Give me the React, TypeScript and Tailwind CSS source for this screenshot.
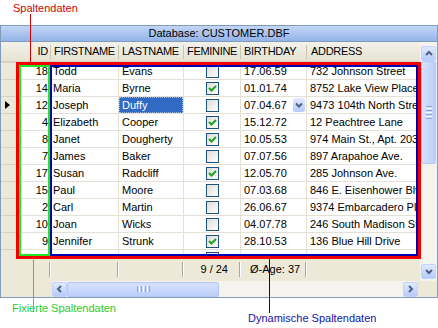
import React from "react";

type Row = { id: number; first: string; last: string; fem: boolean; birth: string; addr: string };

const rows: Row[] = [
  { id: 18, first: "Todd", last: "Evans", fem: false, birth: "17.06.59", addr: "732 Johnson Street" },
  { id: 14, first: "Maria", last: "Byrne", fem: true, birth: "01.01.74", addr: "8752 Lake View Place" },
  { id: 12, first: "Joseph", last: "Duffy", fem: false, birth: "07.04.67", addr: "9473 104th North Street" },
  { id: 4, first: "Elizabeth", last: "Cooper", fem: true, birth: "15.12.72", addr: "12 Peachtree Lane" },
  { id: 8, first: "Janet", last: "Dougherty", fem: true, birth: "10.05.53", addr: "974 Main St., Apt. 203" },
  { id: 7, first: "James", last: "Baker", fem: false, birth: "07.07.56", addr: "897 Arapahoe Ave." },
  { id: 17, first: "Susan", last: "Radcliff", fem: true, birth: "12.05.70", addr: "285 Johnson Ave." },
  { id: 15, first: "Paul", last: "Moore", fem: false, birth: "07.03.68", addr: "846 E. Eisenhower Blvd" },
  { id: 2, first: "Carl", last: "Martin", fem: false, birth: "26.06.67", addr: "9374 Embarcadero Plaza" },
  { id: 10, first: "Joan", last: "Wicks", fem: false, birth: "04.07.78", addr: "246 South Madison Street" },
  { id: 9, first: "Jennifer", last: "Strunk", fem: true, birth: "28.10.53", addr: "136 Blue Hill Drive" },
  { id: 16, first: "Kathy", last: "Green", fem: true, birth: "31.01.75", addr: "1643 Lawrence Ave." },
];

function Check({ on }: { on: boolean }) {
  return (
    <div className="w-[13px] h-[13px] border border-[#1c5180] bg-gradient-to-br from-[#dcdcd7] to-white flex items-center justify-center">
      {on && (
        <svg width="9" height="9" viewBox="0 0 9 9">
          <polyline points="1,4 3.5,6.5 8,2" fill="none" stroke="#21a121" strokeWidth="2" />
        </svg>
      )}
    </div>
  );
}

function Arrow({ dir }: { dir: "up" | "down" | "left" | "right" }) {
  const pts = {
    up: "2,6 5,3 8,6",
    down: "2,3 5,6 8,3",
    left: "6,2 3,5 6,8",
    right: "3,2 6,5 3,8",
  }[dir];
  return (
    <div className="w-[15px] h-[15px] rounded-[2px] border border-[#c3d3fd] bg-gradient-to-b from-[#e1eafe] to-[#b6cbf9] flex items-center justify-center shrink-0">
      <svg width="10" height="10" viewBox="0 0 10 10">
        <polyline points={pts} fill="none" stroke="#4d6185" strokeWidth="2" />
      </svg>
    </div>
  );
}

function Sep() {
  return <div className="w-[2px] h-[15px] shrink-0 border-l border-[#aca899] border-r border-r-white" />;
}

function HeadSep() {
  return <div className="w-[1px] h-[14px] shrink-0 bg-[#c7c5b2]" />;
}

export default function App() {
  return (
    <div className="relative w-[438px] h-[328px] bg-white overflow-hidden font-['Liberation_Sans',Arial,sans-serif] text-[11px] text-black leading-none">
      {/* top label */}
      <div className="h-[25px] pl-[13px] pt-[3px] text-[#d40000]">Spaltendaten</div>

      {/* grid */}
      <div className="w-[438px] h-[273px] border border-[#7f9db9] bg-[#ece9d8] flex flex-col">
        <div className="h-[16px] shrink-0 bg-gradient-to-b from-[#c3d5f4] to-[#94b3e8] border-b border-[#7f9db9] flex items-center justify-center">
          Database: CUSTOMER.DBF
        </div>
        <div className="flex flex-1">
          <div className="w-[419px] flex flex-col">
            {/* header */}
            <div className="h-[21px] flex items-center bg-gradient-to-b from-[#f3f2ea] to-[#e6e3d3] border-b-[2px] border-[#d6d2c2] tracking-[-0.3px]">
              <div className="w-[16px]" />
              <div className="w-[34px] flex items-center justify-end">
                <span className="pr-[2px]">ID</span>
                <HeadSep />
              </div>
              <div className="w-[68px] flex items-center justify-between pl-[3px]">
                <span>FIRSTNAME</span>
                <HeadSep />
              </div>
              <div className="w-[65px] flex items-center justify-between pl-[3px]">
                <span>LASTNAME</span>
                <HeadSep />
              </div>
              <div className="w-[57px] flex items-center justify-between pl-[3px]">
                <span className="whitespace-nowrap">FEMININE</span>
                <HeadSep />
              </div>
              <div className="w-[66px] flex items-center justify-between pl-[3px]">
                <span>BIRTHDAY</span>
                <HeadSep />
              </div>
              <div className="flex-1 flex items-center pl-[4px]">ADDRESS</div>
            </div>
            {/* rows */}
            <div className="h-[194px] overflow-hidden bg-white">
              {rows.map((r, i) => {
                const sel = i === 2;
                return (
                  <div key={i} className="h-[17px] flex">
                    <div className="w-[16px] shrink-0 bg-[#ece9d8] border-b border-[#d6d2c2] border-r border-r-[#aca899] flex items-center pl-[4px]">
                      {sel && (
                        <svg width="5" height="8" viewBox="0 0 5 8">
                          <polygon points="0,0 5,4 0,8" fill="#000" />
                        </svg>
                      )}
                    </div>
                    <div className="w-[34px] shrink-0 flex items-center justify-end pr-[2px] border-b border-r border-[#e3e1d6]">{r.id}</div>
                    <div className="w-[68px] shrink-0 flex items-center pl-[2px] border-b border-r border-[#e3e1d6] whitespace-nowrap overflow-hidden">{r.first}</div>
                    <div className="w-[65px] shrink-0 border-b border-r border-[#e3e1d6] flex">
                      <div className={sel ? "flex-1 flex items-center pl-[2px] bg-[#316ac5] text-white border border-dotted border-[#9bb6e3]" : "flex-1 flex items-center pl-[3px]"}>{r.last}</div>
                    </div>
                    <div className="w-[57px] shrink-0 flex items-center justify-center border-b border-r border-[#e3e1d6]">
                      <Check on={r.fem} />
                    </div>
                    <div className="w-[66px] shrink-0 flex items-center justify-between pl-[3px] pr-[1px] border-b border-r border-[#e3e1d6]">
                      <span>{r.birth}</span>
                      {sel && (
                        <div className="w-[12px] h-[14px] rounded-[2px] bg-gradient-to-b from-[#e1eafe] to-[#b6cbf9] flex items-center justify-center">
                          <svg width="8" height="8" viewBox="0 0 8 8">
                            <polyline points="1,2.5 4,5.5 7,2.5" fill="none" stroke="#4d6185" strokeWidth="2" />
                          </svg>
                        </div>
                      )}
                    </div>
                    <div className="flex-1 flex items-center pl-[3px] border-b border-[#e3e1d6] whitespace-nowrap overflow-hidden">{r.addr}</div>
                  </div>
                );
              })}
            </div>
            {/* status */}
            <div className="h-[24px] flex items-center">
              <div className="w-[50px] flex justify-end"><Sep /></div>
              <div className="w-[68px] flex justify-end"><Sep /></div>
              <div className="w-[65px] flex justify-end"><Sep /></div>
              <div className="w-[57px] flex items-center justify-end gap-[11px]">
                <span>9 / 24</span>
                <Sep />
              </div>
              <div className="w-[66px] flex items-center justify-between pl-[9px]">
                <span>Ø-Age: 37</span>
                <Sep />
              </div>
            </div>
            {/* horizontal scrollbar */}
            <div className="h-[16px] flex">
              <div className="w-[51px]" />
              <div className="w-[366px] flex items-center bg-[#f4f3ee]">
                <Arrow dir="left" />
                <div className="w-[152px] h-[15px] rounded-[2px] border border-[#b4c8f6] bg-gradient-to-b from-[#d6e1fd] to-[#bccffb] flex items-center justify-center gap-[1px]">
                  <div className="w-[1px] h-[6px] bg-[#8aa6e6]" />
                  <div className="w-[1px] h-[6px] bg-white" />
                  <div className="w-[1px] h-[6px] bg-[#8aa6e6]" />
                  <div className="w-[1px] h-[6px] bg-white" />
                  <div className="w-[1px] h-[6px] bg-[#8aa6e6]" />
                  <div className="w-[1px] h-[6px] bg-white" />
                  <div className="w-[1px] h-[6px] bg-[#8aa6e6]" />
                </div>
                <div className="flex-1" />
                <Arrow dir="right" />
              </div>
            </div>
          </div>
          {/* vertical scrollbar */}
          <div className="w-[17px] flex flex-col">
            <div className="h-[239px] flex flex-col items-center pt-[4px] bg-[#f4f3ee]">
              <Arrow dir="up" />
              <div className="w-[15px] h-[103px] rounded-[2px] border border-[#b4c8f6] bg-gradient-to-r from-[#d6e1fd] to-[#bccffb] flex flex-col items-center justify-center gap-[1px]">
                <div className="w-[6px] h-[1px] bg-[#8aa6e6]" />
                <div className="w-[6px] h-[1px] bg-white" />
                <div className="w-[6px] h-[1px] bg-[#8aa6e6]" />
                <div className="w-[6px] h-[1px] bg-white" />
                <div className="w-[6px] h-[1px] bg-[#8aa6e6]" />
                <div className="w-[6px] h-[1px] bg-white" />
                <div className="w-[6px] h-[1px] bg-[#8aa6e6]" />
              </div>
              <div className="flex-1" />
              <Arrow dir="down" />
              <div className="h-[2px]" />
            </div>
          </div>
        </div>
      </div>

      {/* bottom labels */}
      <div className="flex items-start">
        <span className="w-[236px] ml-[12px] mt-[5px] text-[#2ccc2c]">Fixierte Spaltendaten</span>
        <span className="mt-[15px] text-[#1414a8]">Dynamische Spaltendaten</span>
      </div>

      {/* annotation frames and leader lines */}
      <div className="absolute left-[30px] top-[14px] w-[1px] h-[49px] bg-[#d40000]" />
      <div className="absolute left-[16px] top-[62px] w-[405px] h-[197px] border-[3px] border-[#f00000]" />
      <div className="absolute left-[19px] top-[65px] w-[31px] h-[191px] border-2 border-[#22e622]" />
      <div className="absolute left-[50px] top-[65px] w-[368px] h-[191px] border-2 border-[#0000b0]" />
      <div className="absolute left-[33px] top-[258px] w-[1px] h-[54px] bg-[#22e622]" />
      <div className="absolute left-[269px] top-[258px] w-[1px] h-[55px] bg-[#0000b0]" />
    </div>
  );
}
